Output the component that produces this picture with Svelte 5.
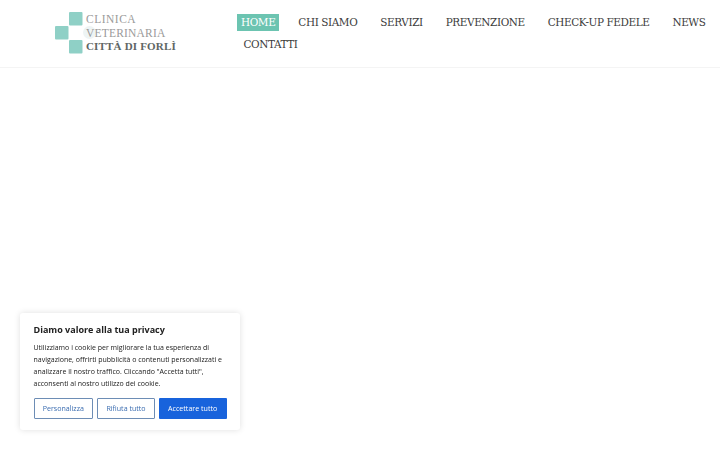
<script>
  const links = ["Home", "Chi siamo", "Servizi", "Prevenzione", "Check-up fedele", "News", "Contatti"];
</script>

<header class="header">
  <a class="logo" href="#top">
    <svg class="mark" viewBox="0 0 42 42" width="42" height="42" aria-hidden="true">
      <rect x="14" y="0" width="13.5" height="13.5" rx="1" fill="#8fd0c6" />
      <rect x="0" y="14" width="13.5" height="13.5" rx="1" fill="#8fd0c6" />
      <rect x="14" y="28" width="13.5" height="13.5" rx="1" fill="#8fd0c6" />
      <circle cx="34.5" cy="20.5" r="6.5" fill="#eef4f4" />
    </svg>
    <div class="logo-text">
      <span>CLINICA</span>
      <span class="mid">VETERINARIA</span>
      <strong>CITTÀ DI FORLÌ</strong>
    </div>
  </a>
  <nav class="nav">
    {#each links as link, i}
      <a class="link" class:active={i == 0} href="#top">{link}</a>
    {/each}
  </nav>
</header>

<aside class="cookie">
  <h2>Diamo valore alla tua privacy</h2>
  <p>
    Utilizziamo i cookie per migliorare la tua esperienza di navigazione, offrirti pubblicità o
    contenuti personalizzati e analizzare il nostro traffico. Cliccando "Accetta tutti",
    acconsenti al nostro utilizzo dei cookie.
  </p>
  <div class="actions">
    <button class="outline first">Personalizza</button>
    <button class="outline second">Rifiuta tutto</button>
    <button class="primary">Accettare tutto</button>
  </div>
</aside>

<style>
  :global(body) {
    background: #fff;
    height: 450px;
    overflow: hidden;
  }
  .header {
    display: flex;
    height: 67px;
    padding-left: 55px;
    border-bottom: 1px solid #f4f4f4;
  }
  .logo {
    display: flex;
    width: 182px;
    padding-top: 12px;
    text-decoration: none;
    flex-shrink: 0;
  }
  .mark {
    flex-shrink: 0;
  }
  .logo-text {
    display: flex;
    flex-direction: column;
    margin-left: -11px;
    font-family: "Liberation Serif", serif;
    font-size: 11.5px;
    line-height: 13.5px;
    letter-spacing: 0.5px;
    color: #9a9a9a;
    padding-top: 1px;
  }
  .logo-text .mid {
    letter-spacing: 0.2px;
  }
  .logo-text strong {
    color: #5e6664;
    font-size: 11px;
    font-weight: 700;
    letter-spacing: 0.18px;
  }
  .nav {
    display: flex;
    flex-wrap: wrap;
    align-content: flex-start;
    width: 483px;
    padding-top: 14px;
    column-gap: 15px;
    row-gap: 4.5px;
  }
  .link {
    padding: 0 4px;
    height: 17px;
    line-height: 17px;
    font-family: "DejaVu Serif Condensed", "DejaVu Serif", serif;
    font-size: 11.6px;
    letter-spacing: -0.4px;
    text-transform: uppercase;
    color: #3c3c3c;
    text-decoration: none;
    white-space: nowrap;
  }
  .link:last-child {
    margin-left: 2.5px;
  }
  .link.active {
    background: #6cc4b1;
    color: #fff;
  }
  .cookie {
    position: fixed;
    left: 20px;
    top: 313px;
    width: 220px;
    height: 117px;
    box-sizing: border-box;
    padding: 10px 13.5px;
    background: #fff;
    border-radius: 3px;
    box-shadow: 0 0 6px rgba(0, 0, 0, 0.13);
    font-family: "Open Sans", sans-serif;
  }
  h2 {
    margin: 0 0 6px;
    font-size: 9px;
    line-height: 13px;
    font-weight: 700;
    color: #212121;
  }
  p {
    margin: 0 0 7.5px;
    font-size: 7px;
    line-height: 12px;
    color: #212121;
  }
  .actions {
    display: flex;
    gap: 4px;
  }
  button {
    height: 21.5px;
    padding: 0;
    border-radius: 1px;
    font-family: inherit;
    font-size: 7.1px;
  }
  .outline {
    border: 1.5px solid #6d8db5;
    background: transparent;
    color: #3a6cb0;
  }
  .first {
    width: 60px;
  }
  .second {
    width: 58px;
  }
  .primary {
    width: 68px;
    border: none;
    background: #1863dc;
    color: #fff;
  }
</style>
